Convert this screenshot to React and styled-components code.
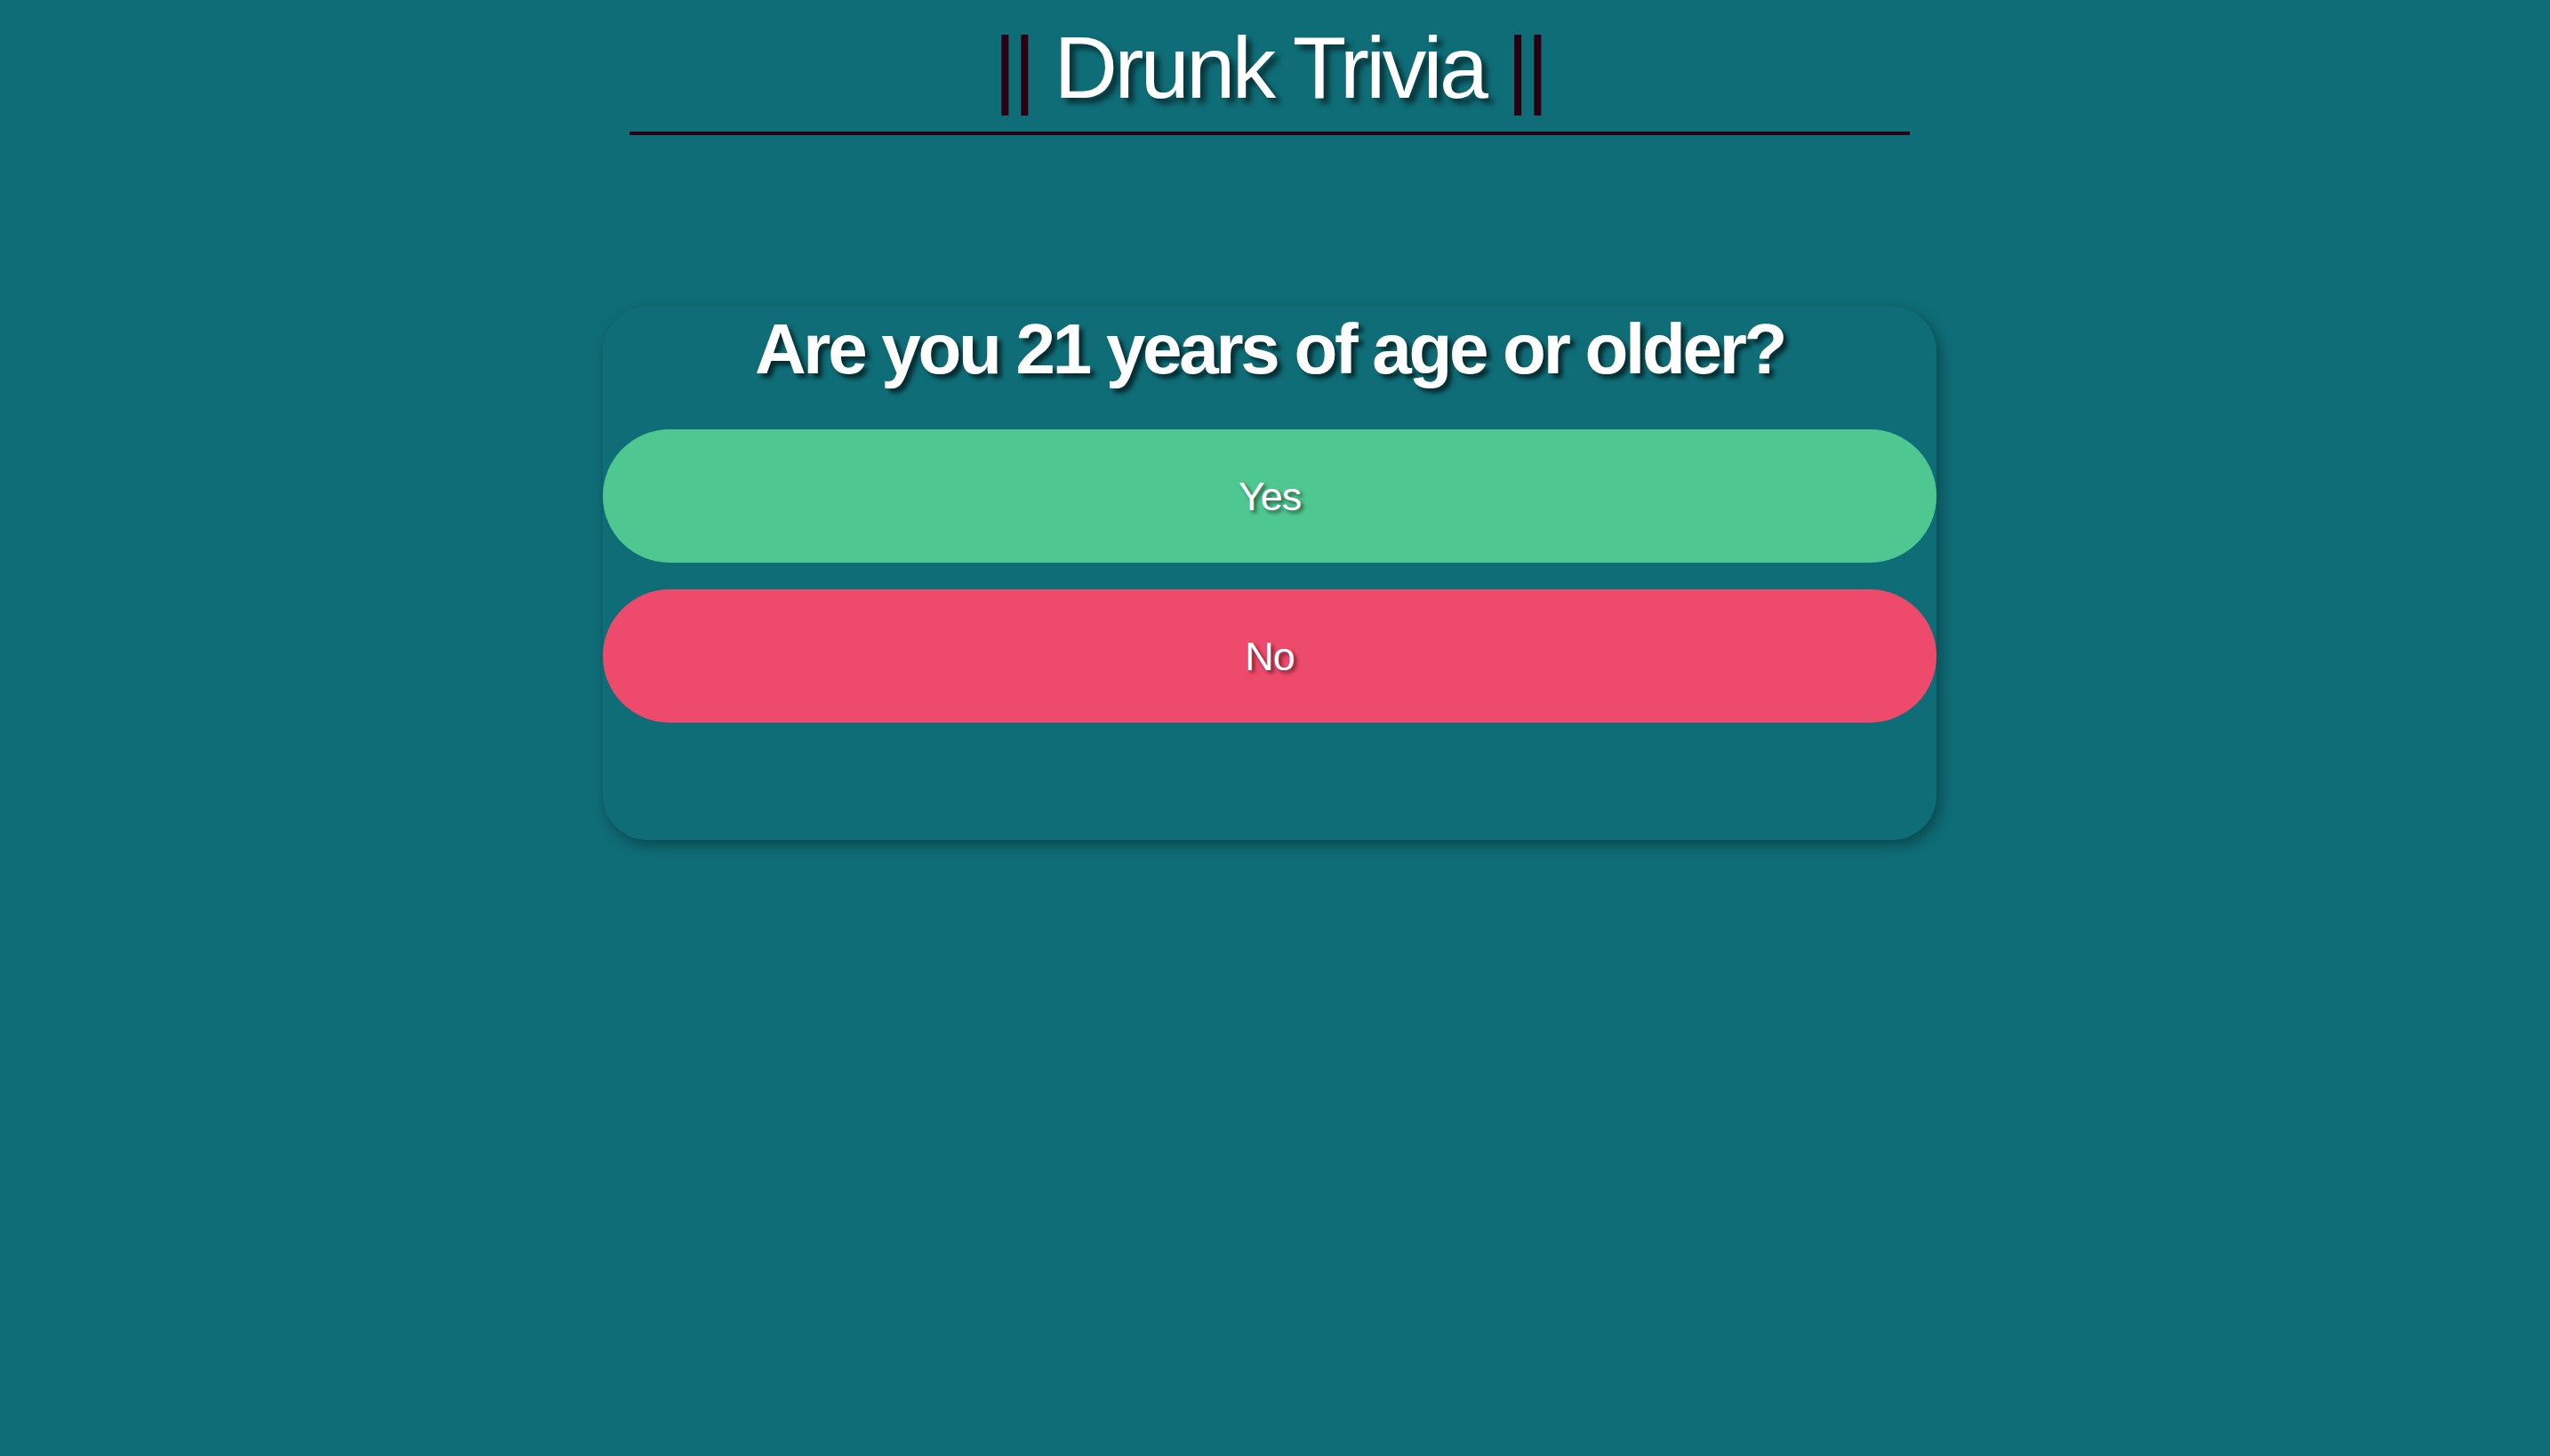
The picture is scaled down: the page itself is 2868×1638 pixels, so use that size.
import React from 'react';
import styled, { createGlobalStyle } from 'styled-components';

const GlobalStyle = createGlobalStyle`
  html, body {
    margin: 0;
    padding: 0;
    background-color: #0f6d77;
  }

  body {
    font-family: "Liberation Sans", Arial, sans-serif;
    color: #fff;
    min-height: 100vh;
  }
`;

const Page = styled.div`
  display: flex;
  flex-direction: column;
  align-items: center;
  padding: 19px 12px 0 0;
`;

const Header = styled.header`
  display: flex;
  flex-direction: column;
  align-items: center;
  width: 1440px;
`;

const Title = styled.h1`
  margin: 0;
  font-size: 99px;
  font-weight: 400;
  line-height: 1.15;
  letter-spacing: -3.6px;
  text-shadow: 6px 6px 6px rgba(0, 0, 0, 0.55);
`;

const Bars = styled.span`
  color: #2b0012;
  text-shadow: none;
`;

const Rule = styled.div`
  width: 100%;
  height: 4px;
  margin-top: 15px;
  background-color: #2b0012;
`;

const Card = styled.section`
  display: flex;
  flex-direction: column;
  align-items: stretch;
  width: 1500px;
  height: 600px;
  box-sizing: border-box;
  margin-top: 193px;
  padding-top: 3px;
  border-radius: 50px;
  background-color: #0f6d77;
  box-shadow: 4px 6px 16px rgba(0, 0, 0, 0.35);
`;

const Question = styled.h2`
  margin: 0 0 46px;
  font-size: 80px;
  font-weight: 700;
  line-height: 1.117;
  letter-spacing: -3.3px;
  text-align: center;
  text-shadow: 5px 5px 5px rgba(0, 0, 0, 0.6);
`;

const Answers = styled.div`
  display: flex;
  flex-direction: column;
  gap: 30px;
`;

const AnswerButton = styled.button`
  height: 150px;
  border: none;
  border-radius: 75px;
  background-color: ${(p) => p.$color};
  color: #fff;
  font-family: "Liberation Sans", Arial, sans-serif;
  font-size: 45px;
  letter-spacing: -1px;
  padding-top: 2px;
  text-shadow: 3px 3px 4px rgba(0, 0, 0, 0.55);
  cursor: pointer;
`;

const answers = [
  { label: 'Yes', color: '#4fc791' },
  { label: 'No', color: '#ee4a6b' },
];

export default function App() {
  return (
    <>
      <GlobalStyle />
      <Page>
        <Header>
          <Title>
            <Bars>||</Bars> Drunk Trivia <Bars>||</Bars>
          </Title>
          <Rule />
        </Header>
        <Card>
          <Question>Are you 21 years of age or older?</Question>
          <Answers>
            {answers.map((a) => (
              <AnswerButton key={a.label} $color={a.color}>
                {a.label}
              </AnswerButton>
            ))}
          </Answers>
        </Card>
      </Page>
    </>
  );
}
